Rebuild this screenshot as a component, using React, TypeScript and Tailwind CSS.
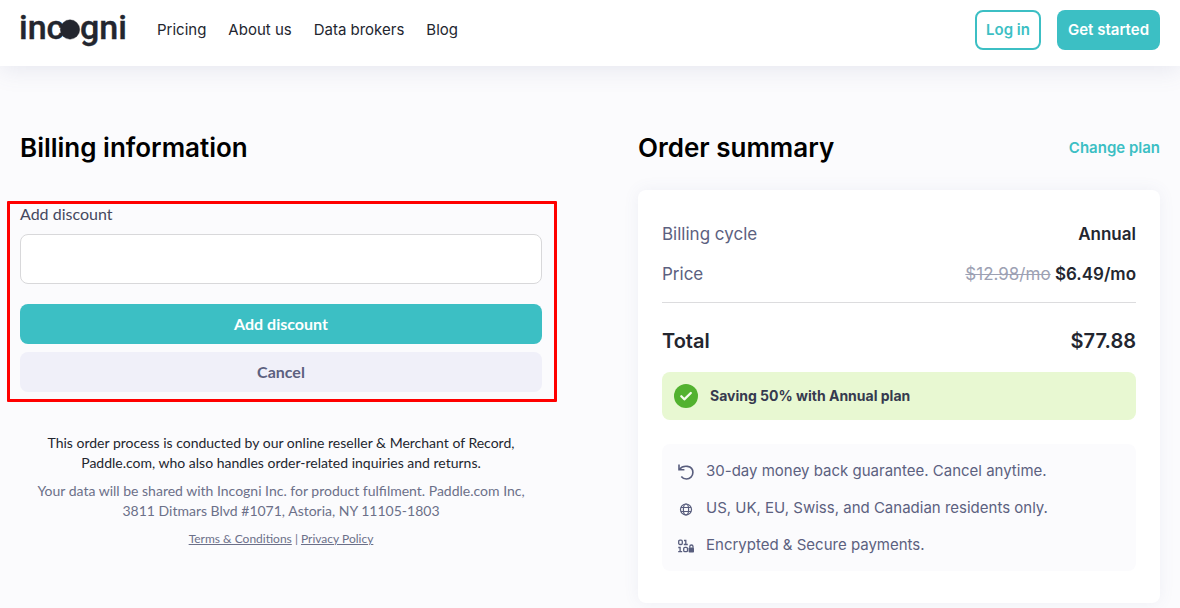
import * as React from 'react';

const navLinks = ['Pricing', 'About us', 'Data brokers', 'Blog'];

function Logo() {
  return (
    <a href="#" aria-label="incogni" className="block">
      <svg width="112" height="56" viewBox="-2 -8 112 56" fill="#23262f" stroke="#23262f" strokeWidth="0.4" fontFamily="Roboto, sans-serif" fontSize="34" fontWeight="500">
        <text x="-1" y="29">inc</text>
        <circle cx="50" cy="19.500" r="9.700" />
        <text x="60" y="29">gni</text>
      </svg>
    </a>
  );
}

function Header() {
  return (
    <header className="flex h-[66px] items-center justify-between bg-white px-5 pb-1.5 shadow-[0_4px_24px_rgba(90,100,150,0.13)]">
      <div className="-ml-0.5 flex items-center">
        <Logo />
        <nav className="ml-[27px] flex gap-[22px] text-[15px] leading-5">
          {navLinks.map((link) => (
            <a key={link} href="#">{link}</a>
          ))}
        </nav>
      </div>
      <div className="flex gap-4 text-[15px] font-semibold">
        <button className="h-10 rounded-lg border-2 border-[#3cbfc4] px-[9px] text-[#3cbfc4]">Log in</button>
        <button className="h-10 rounded-lg bg-[#3cbfc4] px-[11px] text-white">Get started</button>
      </div>
    </header>
  );
}

function RefundIcon() {
  return (
    <svg width="16" height="16" viewBox="0 0 16 16" fill="none" stroke="#585d7d" strokeWidth="1.6" className="mt-1 shrink-0">
      <path d="M1 0.5v5.2h5.4" />
      <path d="M1.4 5.3C5 .8 14.9.8 14.9 8.6c0 3.6-2.9 6.4-6.4 6.4-2.3 0-4-.9-5.2-2.5" />
    </svg>
  );
}

function GlobeIcon() {
  return (
    <svg width="16" height="16" viewBox="0 0 16 16" fill="none" stroke="#585d7d" strokeWidth="1.2" className="mt-1 shrink-0">
      <circle cx="8" cy="8.5" r="5.5" />
      <ellipse cx="8" cy="8.5" rx="2.6" ry="5.5" />
      <path d="M3 6.5h10M3 10.5h10" />
    </svg>
  );
}

function EncryptedIcon() {
  return (
    <svg width="16" height="16" viewBox="0 0 16 16" fill="none" stroke="#585d7d" strokeWidth="1.3" className="mt-1 shrink-0">
      <rect x="0.7" y="2.2" width="3.6" height="4.3" rx="1.2" />
      <path d="M6 2.5h1.8v4.2M5.8 6.5h4" />
      <path d="M0.3 9.5h1.8v4.2M0.2 13.7h4" />
      <rect x="5.7" y="9.3" width="3.8" height="4.4" rx="1.3" />
      <rect x="10.6" y="9.5" width="5.4" height="5" rx="0.8" fill="#585d7d" stroke="none" />
      <path d="M11.8 9.8V8.6a1.6 1.6 0 0 1 3.2 0v1.2" />
    </svg>
  );
}

const perks = [
  { icon: <RefundIcon />, text: '30-day money back guarantee. Cancel anytime.' },
  { icon: <GlobeIcon />, text: 'US, UK, EU, Swiss, and Canadian residents only.' },
  { icon: <EncryptedIcon />, text: 'Encrypted & Secure payments.' },
];

function BillingInformation() {
  return (
    <section>
      <h1 className="text-[26px] leading-9 font-semibold text-black">Billing information</h1>
      <div className="font-[Lato,sans-serif]">
        <form className="relative mt-9 flex flex-col" onSubmit={(e) => e.preventDefault()}>
          <label htmlFor="discount" className="text-[16px] leading-6 text-[#45485f]">Add discount</label>
          <input id="discount" type="text" className="mt-2 h-[50px] rounded-lg border border-[#d8d8da] bg-white px-4 outline-none" />
          <button type="submit" className="mt-5 h-10 rounded-lg bg-[#3cbfc4] text-[16px] font-bold text-white">Add discount</button>
          <button type="button" className="mt-2 h-10 rounded-lg bg-[#f0f0f9] text-[16px] font-bold text-[#5c6180]">Cancel</button>
          <div className="pointer-events-none absolute -top-px -right-[15px] -bottom-2.5 -left-[13px] rounded-[1px] border-3 border-[#ff0000]" />
        </form>
        <div className="mt-[41px] text-center text-[14px] leading-5 text-[#6c7089]">
          <p className="text-[#23262f]">
            This order process is conducted by our online reseller &amp; Merchant of Record,
            <br />
            Paddle.com, who also handles order-related inquiries and returns.
          </p>
          <p className="mt-2">
            Your data will be shared with Incogni Inc. for product fulfilment. Paddle.com Inc,
            <br />
            3811 Ditmars Blvd #1071, Astoria, NY 11105-1803
          </p>
          <p className="mt-2 text-[12px]">
            <a href="#" className="underline">Terms &amp; Conditions</a> | <a href="#" className="underline">Privacy Policy</a>
          </p>
        </div>
      </div>
    </section>
  );
}

function OrderSummary() {
  return (
    <section>
      <div className="flex items-center justify-between">
        <h2 className="text-[26px] leading-9 font-semibold text-black">Order summary</h2>
        <a href="#" className="text-[15px] leading-5 font-semibold text-[#3cbfc4]">Change plan</a>
      </div>
      <div className="mt-6 rounded-lg bg-white px-6 py-8 shadow-[0_0_16px_rgba(90,100,150,0.08)]">
        <dl className="flex flex-col gap-4 border-b border-[#dcdcde] pb-4 text-[17px] leading-6">
          <div className="flex justify-between">
            <dt className="text-[#5c6180]">Billing cycle</dt>
            <dd className="font-semibold">Annual</dd>
          </div>
          <div className="flex justify-between">
            <dt className="text-[#5c6180]">Price</dt>
            <dd className="font-semibold">
              <s className="font-normal text-[#9da1b3]">$12.98/mo</s> $6.49/mo
            </dd>
          </div>
        </dl>
        <div className="mt-[23px] flex justify-between text-[20px] leading-[30px] font-semibold">
          <span>Total</span>
          <span>$77.88</span>
        </div>
        <div className="mt-4 flex h-12 items-center gap-3 rounded-lg bg-[#e8f8d2] px-3 text-[14px] leading-5 font-bold text-[#363a4f]">
          <svg width="24" height="24" viewBox="0 0 24 24">
            <circle cx="12" cy="12" r="12" fill="#52b22f" />
            <path d="M7.3 12.3l3 3 6.5-6.3" fill="none" stroke="#f3fcea" strokeWidth="2.3" strokeLinecap="round" strokeLinejoin="round" />
          </svg>
          Saving 50% with Annual plan
        </div>
        <ul className="mt-6 flex flex-col gap-4 rounded-lg bg-[#fbfbfd] p-4 text-[15px] leading-[21px] text-[#5c6180]">
          {perks.map((perk) => (
            <li key={perk.text} className="flex gap-3">
              {perk.icon}
              {perk.text}
            </li>
          ))}
        </ul>
      </div>
    </section>
  );
}

export default function App() {
  return (
    <div className="min-h-screen bg-[#fbfbfd] font-[Inter,sans-serif] text-[#23262f]">
      <Header />
      <main className="grid grid-cols-2 gap-24 px-5 pt-16">
        <BillingInformation />
        <OrderSummary />
      </main>
    </div>
  );
}
